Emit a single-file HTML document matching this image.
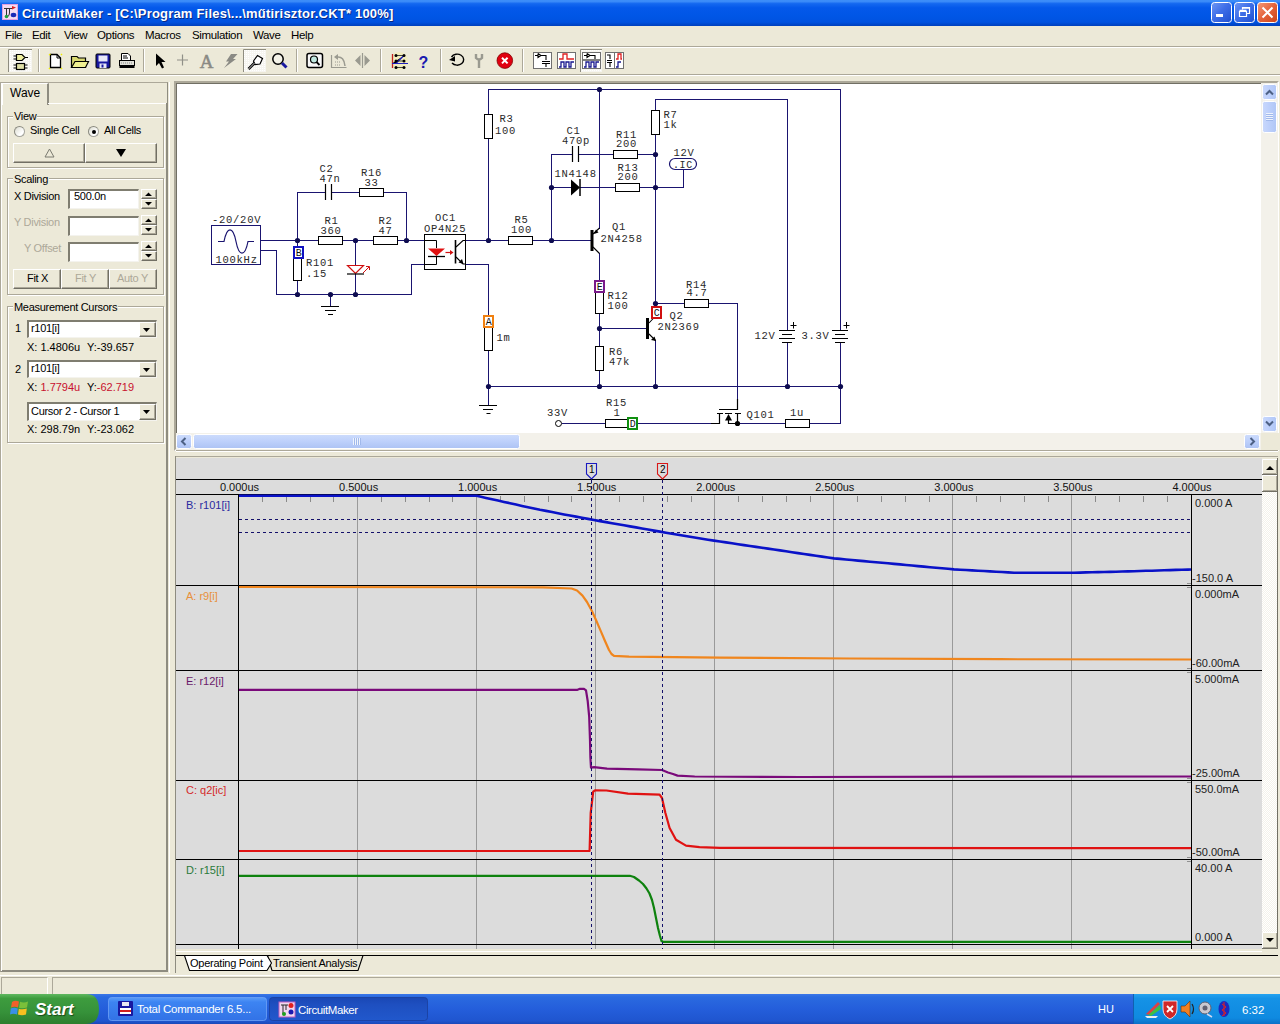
<!DOCTYPE html>
<html><head><meta charset="utf-8">
<style>
*{margin:0;padding:0;box-sizing:border-box}
html,body{width:1280px;height:1024px;overflow:hidden;background:#ece9d8;font-family:"Liberation Sans",sans-serif;font-size:11px;color:#000}
.a{position:absolute}
#title{left:0;top:0;width:1280px;height:26px;background:linear-gradient(#3d8ef8 0%,#3a8af8 6%,#1468f0 14%,#0458ea 30%,#0056e6 60%,#0052e0 85%,#0040bc 100%)}
#title .t{left:22px;top:5px;color:#fff;font-weight:bold;font-size:13px;letter-spacing:0.1px;text-shadow:1px 1px #0a1e6e}
.wb{top:3px;width:21px;height:21px;border:1px solid #fff;border-radius:3px;background:linear-gradient(135deg,#5a8cf5,#2058d8 60%,#1848c0)}
#menu{left:0;top:26px;width:1280px;height:20px}
#menu span{position:absolute;top:3px;font-size:11.5px;letter-spacing:-0.35px}
.sep{background:#aca899;}
.tbsep{width:1px;height:22px;top:50px;background:#aca899;border-right:1px solid #fff}
#left{left:0;top:82px;width:168px;height:890px;border:1px solid #8e8c80;border-left-color:#aca899;border-top-color:#aca899}
#sch{left:174px;top:81px;width:1105px;height:370px;background:#fff;border:2px solid;border-color:#aca899 #fff #fff #aca899;box-shadow:inset 1px 1px #716f64}
#wave{left:175px;top:458px;width:1087px;height:491px;background:#dcdcdc}
.lbl{font-family:"Liberation Mono",monospace;font-size:11px;position:absolute;white-space:pre}
#status{left:0;top:977px;width:1280px;height:17px;border-top:1px solid #fff}
#task{left:0;top:994px;width:1280px;height:30px;background:linear-gradient(#3168d5 0%,#4993e6 6%,#2157d7 14%,#245edb 50%,#2257d5 90%,#1941a5 100%)}

.tx{font-size:11px;letter-spacing:-0.3px;white-space:nowrap;line-height:13px;margin-top:-1px}
.gl{background:#ece9d8;padding:0 1px}
.dis{color:#aca899}
.grp{border:1px solid #aca899;box-shadow:inset 1px 1px #fff,1px 1px #fff}
.radio{width:11px;height:11px;border-radius:6px;background:linear-gradient(135deg,#dcdcd0,#fff 70%);border:1px solid #a4a49c;border-top-color:#8a8a80;border-left-color:#8a8a80}
.btn{background:#ece9d8;border:1px solid;border-color:#fff #716f64 #716f64 #fff;box-shadow:inset -1px -1px #aca899}
.edit{background:#fff;border:2px solid;border-color:#7f7d70 #f4f3ee #f4f3ee #7f7d70;border-right-width:1px;border-bottom-width:1px}
.spin{width:16px;height:21px}
.combo{background:#fff;border:2px solid;border-color:#7f7d70 #f4f3ee #f4f3ee #7f7d70;border-right-width:1px;border-bottom-width:1px}
</style></head><body>
<div id="title" class="a">
<svg class="a" style="left:0;top:0" width="1280" height="26" viewBox="0 0 1280 26">
 <defs>
  <linearGradient id="mbg" x1="0" y1="0" x2="1" y2="1"><stop offset="0" stop-color="#6f97f4"/><stop offset="0.45" stop-color="#3f6fe8"/><stop offset="1" stop-color="#1f4fd0"/></linearGradient>
  <linearGradient id="cbg" x1="0" y1="0" x2="1" y2="1"><stop offset="0" stop-color="#f39a78"/><stop offset="0.5" stop-color="#e4623a"/><stop offset="1" stop-color="#cc4418"/></linearGradient>
 </defs>
 <rect x="2.5" y="4.5" width="15" height="15" fill="#f4dcf2" stroke="#e0a0e0" stroke-width="1"/>
 <path d="M4 8.5 H12 M6.5 8.5 V16 M9.5 8.5 V13 Q9.5 16 7 17" fill="none" stroke="#333" stroke-width="1"/>
 <path d="M12 6 L16 7.5 L12 9.5 Z" fill="#e02020"/><ellipse cx="13.5" cy="15" rx="2.8" ry="2.2" fill="#1a2ab8"/><circle cx="6.5" cy="16.5" r="1.8" fill="#20a040"/>
 <text x="22" y="18" font-family="Liberation Sans" font-weight="bold" font-size="13" letter-spacing="0.2" fill="#0a1e6e" opacity="0.8" transform="translate(1 1)">CircuitMaker - [C:\Program Files\...\műtirisztor.CKT* 100%]</text>
 <text x="22" y="18" font-family="Liberation Sans" font-weight="bold" font-size="13" letter-spacing="0.2" fill="#fff">CircuitMaker - [C:\Program Files\...\műtirisztor.CKT* 100%]</text>
 <rect x="1211.5" y="2.5" width="20" height="20" rx="3" fill="url(#mbg)" stroke="#fff" stroke-width="1"/>
 <rect x="1216" y="14" width="7" height="3" fill="#fff"/>
 <rect x="1234.5" y="2.5" width="20" height="20" rx="3" fill="url(#mbg)" stroke="#fff" stroke-width="1"/>
 <path d="M1239.5 11.5 H1246.5 V16.5 H1239.5 Z M1242.5 9.5 V7.5 H1249.5 V13.5 H1247" fill="none" stroke="#fff" stroke-width="1.2"/>
 <path d="M1239.5 10.5 H1246.5 M1242.5 8 H1249.5" stroke="#fff" stroke-width="1.6"/>
 <rect x="1257.5" y="2.5" width="20" height="20" rx="3" fill="url(#cbg)" stroke="#fff" stroke-width="1"/>
 <path d="M1262.5 7.5 L1272.5 17.5 M1272.5 7.5 L1262.5 17.5" stroke="#fff" stroke-width="2"/>
</svg>
</div>
<div id="menu" class="a">
  <span style="left:5px">File</span><span style="left:32px">Edit</span><span style="left:64px">View</span><span style="left:97px">Options</span><span style="left:145px">Macros</span><span style="left:192px">Simulation</span><span style="left:253px">Wave</span><span style="left:291px">Help</span>
</div>
<div class="a" style="left:0;top:46px;width:1280px;height:1px;background:#aca899"></div>
<div class="a" style="left:0;top:47px;width:1280px;height:1px;background:#fff"></div>
<div class="a" style="left:0;top:74px;width:1280px;height:1px;background:#aca899"></div>
<div class="a" style="left:0;top:75px;width:1280px;height:1px;background:#fff"></div>



<svg class="a" style="left:0;top:46px" width="640" height="30" viewBox="0 46 640 30">
 <defs><pattern id="dots" width="2" height="2" patternUnits="userSpaceOnUse"><rect width="2" height="2" fill="#f6f5f0"/><rect width="1" height="1" fill="#fff"/></pattern></defs>
 <!-- pressed btn 1 -->
 <rect x="8" y="49" width="24" height="23" fill="url(#dots)"/>
 <path d="M8.5 72 V49.5 H32" fill="none" stroke="#8e8c80"/>
 <path d="M16.5 54.5 H22 L25 57.5 L22 60.5 H16.5 Z" fill="#f0f0a0" stroke="#000" stroke-width="1.2"/>
 <path d="M25 57.5 H28 M13.5 56 H16.5 M13.5 59 H16.5" stroke="#000" stroke-width="1.1"/>
 <rect x="16.5" y="63.5" width="8" height="6" fill="#e0e0a8" stroke="#000" stroke-width="1.2"/>
 <path d="M13.5 65 H16.5 M13.5 68 H16.5 M24.5 65 H27.5 M24.5 68 H27.5" stroke="#000" stroke-width="1.1"/>
 <line x1="38.5" y1="49" x2="38.5" y2="72" stroke="#aca899"/><line x1="39.5" y1="49" x2="39.5" y2="72" stroke="#fff"/>
 <!-- new -->
 <path d="M50.5 54.5 H57 L60.5 58 V67.5 H50.5 Z" fill="#fff" stroke="#000" stroke-width="1.3"/>
 <path d="M57 54.5 V58 H60.5" fill="none" stroke="#000"/>
 <path d="M49 55 l1.5 -1 M61 54 l1 1 M49 68 l1 1 M61 68 l1 1" stroke="#f0f000" stroke-width="1.5"/>
 <!-- open -->
 <path d="M71.5 56.5 H77 L78.5 58 H85.5 V67.5 H71.5 Z" fill="#d8d870" stroke="#000" stroke-width="1.2"/>
 <path d="M71.5 67.5 L75 61.5 H88.5 L85.5 67.5 Z" fill="#f0f090" stroke="#000" stroke-width="1.2"/>
 <!-- save -->
 <rect x="96" y="54" width="14" height="14" rx="1" fill="#1818a0" stroke="#000" stroke-width="1"/>
 <rect x="98.5" y="55.5" width="9" height="6" fill="#e8e8f8"/>
 <rect x="99.5" y="63.5" width="7" height="4.5" fill="#e8e8f8"/><rect x="101.5" y="64.5" width="2" height="3" fill="#1818a0"/>
 <!-- print -->
 <path d="M121.5 53.5 H128 L130.5 56 V60.5 H121.5 Z" fill="#fff" stroke="#000" stroke-width="1"/>
 <path d="M123 56 H127 M123 58 H128" stroke="#000"/>
 <rect x="119.5" y="60.5" width="15" height="5" fill="#e0e0d8" stroke="#000" stroke-width="1"/>
 <path d="M121 63 H133" stroke="#888" stroke-dasharray="1 1"/>
 <rect x="119.5" y="65.5" width="15" height="2.5" fill="#000"/>
 <line x1="143.5" y1="49" x2="143.5" y2="72" stroke="#aca899"/><line x1="144.5" y1="49" x2="144.5" y2="72" stroke="#fff"/>
 <!-- arrow -->
 <path d="M156 53.5 L156 66 L159 63 L162 68.5 L164 67.5 L161.5 62 L165.5 62 Z" fill="#000"/>
 <!-- plus -->
 <path d="M182.5 54.5 V65.5 M177 60 H188" stroke="#909088" stroke-width="1.2"/>
 <!-- A -->
 <text x="206.5" y="68" font-family="Liberation Serif" font-size="19" fill="#8a8a84" text-anchor="middle" stroke="#8a8a84" stroke-width="0.5">A</text>
 <!-- lightning -->
 <path d="M231 54 H237.5 L233 59 H236 L224 68 L229 61.5 H226 Z" fill="#8a8a84"/>
 <!-- pressed probe btn -->
 <rect x="243" y="49" width="23" height="23" fill="url(#dots)"/>
 <path d="M243.5 72 V49.5 H266" fill="none" stroke="#8e8c80"/>
 <path d="M253.5 61 L257.5 55.5 L262.5 58.5 L260 64 L255 64.5 Z" fill="#fff" stroke="#000" stroke-width="1.2"/>
 <path d="M254.5 63 L248.5 69" stroke="#000" stroke-width="2.6"/><path d="M254.5 63 L248.5 69" stroke="#fff" stroke-width="0.8"/>
 <!-- magnifier -->
 <circle cx="278" cy="59" r="5.2" fill="#fff" fill-opacity="0.4" stroke="#000" stroke-width="1.5"/>
 <path d="M282 63 L286.5 67.5" stroke="#1a1aa0" stroke-width="3"/>
 <line x1="296.5" y1="49" x2="296.5" y2="72" stroke="#aca899"/><line x1="297.5" y1="49" x2="297.5" y2="72" stroke="#fff"/>
 <!-- zoom rect -->
 <rect x="307" y="53.5" width="15.5" height="14" rx="2" fill="#f8f8f8" stroke="#000" stroke-width="1.5"/>
 <circle cx="314" cy="59.5" r="3.5" fill="#c0e8e0" stroke="#000" stroke-width="1.2"/>
 <path d="M316.5 62 L319.5 65" stroke="#000" stroke-width="1.8"/>
 <!-- rotate gray -->
 <path d="M331.5 55 V67.5 H346.5" fill="none" stroke="#9a9a90" stroke-width="1.2"/>
 <path d="M337 57 Q344 56 345 66" fill="none" stroke="#9a9a90" stroke-width="1.5"/>
 <path d="M334 57 L338 54 L338 60 Z" fill="#9a9a90"/>
 <path d="M335 62 H341 M335 65 H341" stroke="#9a9a90" stroke-dasharray="1 1"/>
 <!-- flip gray -->
 <path d="M362.5 53 V68" stroke="#9a9a90" stroke-width="1.2"/>
 <path d="M360.5 55 L355 60.5 L360.5 66 Z M364.5 55 L370 60.5 L364.5 66 Z" fill="#9a9a90"/>
 <line x1="380.5" y1="49" x2="380.5" y2="72" stroke="#aca899"/><line x1="381.5" y1="49" x2="381.5" y2="72" stroke="#fff"/>
 <!-- bus icon -->
 <circle cx="399" cy="61" r="9" fill="#f8f0a0" opacity="0.45"/>
 <path d="M392.5 54 V68" stroke="#c02020" stroke-width="1.3"/>
 <path d="M392 63.5 H396 L404 55.5 M396 63.5 H408" stroke="#2020c0" stroke-width="1.2"/>
 <path d="M396 55.5 H404 M396 67.5 H404 M396 61 H404" stroke="#202020" stroke-width="0.8"/>
 <circle cx="396" cy="55.5" r="1.5"/><circle cx="404" cy="55.5" r="1.5"/><circle cx="396" cy="61" r="1.5"/><circle cx="404" cy="61" r="1.5"/><circle cx="396" cy="67.5" r="1.5"/><circle cx="404" cy="67.5" r="1.5"/>
 <!-- ? -->
 <text x="423.5" y="67.5" font-family="Liberation Sans" font-weight="bold" font-size="16" fill="#1a1ab0" text-anchor="middle">?</text>
 <line x1="440.5" y1="49" x2="440.5" y2="72" stroke="#aca899"/><line x1="441.5" y1="49" x2="441.5" y2="72" stroke="#fff"/>
 <!-- undo -->
 <path d="M451.5 57 A6.5 5.5 0 1 1 452 63" fill="none" stroke="#000" stroke-width="1.4"/>
 <path d="M449 60 L455 56 L455 61.5 Z" fill="#000"/>
 <!-- wrench gray -->
 <path d="M476 54 V58 Q479 61 482 58 V54 M479 59 V68" fill="none" stroke="#9a9a90" stroke-width="2.4"/>
 <!-- stop -->
 <circle cx="504.8" cy="60.6" r="7.8" fill="#e00010" stroke="#800000" stroke-width="0.8"/>
 <path d="M502 57.8 L507.6 63.4 M507.6 57.8 L502 63.4" stroke="#fff" stroke-width="2"/>
 <line x1="522.5" y1="49" x2="522.5" y2="72" stroke="#aca899"/><line x1="523.5" y1="49" x2="523.5" y2="72" stroke="#fff"/>
 <!-- icon1 -->
 <rect x="533.5" y="52.5" width="18" height="16" fill="#fff" stroke="#707070"/>
 <path d="M535 55.5 H538 M538 53.5 V57.5 L541 55.5 L538 53.5 M541 55.5 H546 V60 M542 61.5 H550 M542 63.5 H550 M546 63.5 V67" fill="none" stroke="#000" stroke-width="1.1"/>
 <!-- icon2 -->
 <rect x="557.5" y="52.5" width="18" height="16" fill="#fff" stroke="#707070"/>
 <path d="M559 59 H563 V54 H567 V59 H574" fill="none" stroke="#e02020" stroke-width="1.3"/>
 <path d="M559 67 H561 V62 H564 V67 H566 V62 H569 V67 H571 V62 H574" fill="none" stroke="#1a1a90" stroke-width="1.3"/>
 <!-- pressed icon3 -->
 <rect x="580" y="49" width="22" height="23" fill="url(#dots)"/>
 <path d="M580.5 72 V49.5 H602" fill="none" stroke="#8e8c80"/>
 <rect x="582.5" y="52.5" width="18" height="16" fill="#fff" stroke="#707070"/>
 <path d="M584 55.5 H587 M587 53.5 V57.5 L590 55.5 L587 53.5 M590 55.5 H595 V59 M583 60 H600" fill="none" stroke="#000" stroke-width="1.1"/>
 <path d="M584 67 H586 V62 H589 V67 H591 V62 H594 V67 H596 V62 H599" fill="none" stroke="#1a1a90" stroke-width="1.3"/>
 <!-- icon4 -->
 <rect x="605.5" y="52.5" width="18" height="16" fill="#fff" stroke="#707070"/>
 <path d="M607 55 H610 V59 M607 60.5 H612 M607 62.5 H612 M610 62.5 V67" fill="none" stroke="#000" stroke-width="1.1"/>
 <path d="M614.5 53 V68" stroke="#707070"/>
 <path d="M616 59 H618 V54 H621 V59 H622" fill="none" stroke="#e02020" stroke-width="1.3"/>
 <path d="M616 67 H618 V62 H621" fill="none" stroke="#1a1a90" stroke-width="1.3"/>
</svg>

<div id="left" class="a">
  <!-- tab -->
  <div class="a" style="left:1px;top:0px;width:47px;height:22px;border-left:1px solid #fff;border-top:1px solid #fff;border-right:2px solid #8e8c80;background:#ece9d8"></div>
  <div class="a tx" style="left:9px;top:5px;font-size:12px;letter-spacing:0">Wave</div>
  <div class="a" style="left:47px;top:20px;width:119px;height:1px;background:#fff"></div>
  <div class="a" style="left:165px;top:20px;width:1px;height:868px;background:#8e8c80"></div>
  <div class="a" style="left:1px;top:887px;width:165px;height:1px;background:#8e8c80"></div>
  <!-- View group -->
  <div class="a grp" style="left:6px;top:33px;width:157px;height:52px"></div>
  <div class="a tx gl" style="left:12px;top:28px">View</div>
  <div class="a radio" style="left:13px;top:43px"></div>
  <div class="a tx" style="left:29px;top:42px">Single Cell</div>
  <div class="a radio" style="left:87px;top:43px"><div class="a" style="left:3px;top:3px;width:4px;height:4px;border-radius:2px;background:#000"></div></div>
  <div class="a tx" style="left:103px;top:42px">All Cells</div>
  <div class="a btn" style="left:12px;top:60px;width:72px;height:20px"></div>
  <svg class="a" style="left:43px;top:65px" width="11" height="10"><path d="M5.5 1 L10 9 L1 9 Z" fill="none" stroke="#7a7a70" stroke-width="1"/></svg>
  <div class="a btn" style="left:84px;top:60px;width:72px;height:20px"></div>
  <svg class="a" style="left:115px;top:66px" width="10" height="9"><path d="M0 0 L10 0 L5 8 Z" fill="#000"/></svg>
  <!-- Scaling group -->
  <div class="a grp" style="left:6px;top:95px;width:157px;height:117px"></div>
  <div class="a tx gl" style="left:12px;top:91px">Scaling</div>
  <div class="a tx" style="left:13px;top:108px">X Division</div>
  <div class="a edit" style="left:67px;top:106px;width:71px;height:20px"></div>
  <div class="a tx" style="left:73px;top:108px">500.0n</div>
  <div class="a spin" style="left:140px;top:106px"><div class="a btn" style="left:0;top:0;width:16px;height:10px"></div><div class="a btn" style="left:0;top:10px;width:16px;height:10px"></div><svg class="a" style="left:4px;top:3px" width="8" height="14"><path d="M0 4 L7 4 L3.5 0.5 Z M0 10 L7 10 L3.5 13.5 Z" fill="#000"/></svg></div>
  <div class="a tx dis" style="left:13px;top:134px">Y Division</div>
  <div class="a edit" style="left:67px;top:133px;width:71px;height:20px"></div>
  <div class="a spin" style="left:140px;top:132px"><div class="a btn" style="left:0;top:0;width:16px;height:10px"></div><div class="a btn" style="left:0;top:10px;width:16px;height:10px"></div><svg class="a" style="left:4px;top:3px" width="8" height="14"><path d="M0 4 L7 4 L3.5 0.5 Z M0 10 L7 10 L3.5 13.5 Z" fill="#000"/></svg></div>
  <div class="a tx dis" style="left:23px;top:160px">Y Offset</div>
  <div class="a edit" style="left:67px;top:159px;width:71px;height:20px"></div>
  <div class="a spin" style="left:140px;top:158px"><div class="a btn" style="left:0;top:0;width:16px;height:10px"></div><div class="a btn" style="left:0;top:10px;width:16px;height:10px"></div><svg class="a" style="left:4px;top:3px" width="8" height="14"><path d="M0 4 L7 4 L3.5 0.5 Z M0 10 L7 10 L3.5 13.5 Z" fill="#000"/></svg></div>
  <div class="a btn" style="left:12px;top:186px;width:48px;height:20px"></div>
  <div class="a tx" style="left:26px;top:190px">Fit X</div>
  <div class="a btn" style="left:60px;top:186px;width:48px;height:20px"></div>
  <div class="a tx dis" style="left:74px;top:190px">Fit Y</div>
  <div class="a btn" style="left:108px;top:186px;width:48px;height:20px"></div>
  <div class="a tx dis" style="left:116px;top:190px">Auto Y</div>
  <!-- Measurement group -->
  <div class="a grp" style="left:6px;top:223px;width:157px;height:137px"></div>
  <div class="a tx gl" style="left:12px;top:219px">Measurement Cursors</div>
  <div class="a tx" style="left:14px;top:240px">1</div>
  <div class="a combo" style="left:26px;top:237px;width:130px;height:18px"><div class="a btn" style="right:0;top:0;width:17px;height:100%"></div><svg class="a" style="right:5px;top:6px" width="8" height="5"><path d="M0 0 L7 0 L3.5 4 Z" fill="#000"/></svg></div>
  <div class="a tx" style="left:30px;top:240px">r101[i]</div>
  <div class="a tx" style="left:26px;top:259px;letter-spacing:0">X: 1.4806u</div><div class="a tx" style="left:86px;top:259px;letter-spacing:0">Y:-39.657</div>
  <div class="a tx" style="left:14px;top:281px">2</div>
  <div class="a combo" style="left:26px;top:277px;width:130px;height:18px"><div class="a btn" style="right:0;top:0;width:17px;height:100%"></div><svg class="a" style="right:5px;top:6px" width="8" height="5"><path d="M0 0 L7 0 L3.5 4 Z" fill="#000"/></svg></div>
  <div class="a tx" style="left:30px;top:280px">r101[i]</div>
  <div class="a tx" style="left:26px;top:299px;letter-spacing:0">X: <span style="color:#c8102e">1.7794u</span></div><div class="a tx" style="left:86px;top:299px;letter-spacing:0">Y:<span style="color:#c8102e">-62.719</span></div>
  <div class="a combo" style="left:26px;top:319px;width:130px;height:19px"><div class="a btn" style="right:0;top:0;width:17px;height:100%"></div><svg class="a" style="right:5px;top:6px" width="8" height="5"><path d="M0 0 L7 0 L3.5 4 Z" fill="#000"/></svg></div>
  <div class="a tx" style="left:30px;top:323px">Cursor 2 - Cursor 1</div>
  <div class="a tx" style="left:26px;top:341px;letter-spacing:0">X: 298.79n</div><div class="a tx" style="left:86px;top:341px;letter-spacing:0">Y:-23.062</div>
</div>

<div id="sch" class="a"></div>
<!--SCH--><svg class="a" style="left:176px;top:83px" width="1085" height="350" viewBox="176 83 1085 350" shape-rendering="auto"><g font-family="Liberation Mono" fill="none"><path d="M261 240.5H298" stroke="#1a1470"/>
<path d="M261 250.5H277" stroke="#1a1470"/>
<path d="M276.5 250V295" stroke="#1a1470"/>
<path d="M276 294.5H412" stroke="#1a1470"/>
<path d="M297.5 192V241" stroke="#1a1470"/>
<path d="M297.5 240V247" stroke="#1a1470"/>
<path d="M297.5 280V295" stroke="#1a1470"/>
<path d="M297 192.5H326" stroke="#1a1470"/>
<path d="M331 192.5H360" stroke="#1a1470"/>
<path d="M383 192.5H407" stroke="#1a1470"/>
<path d="M406.5 192V241" stroke="#1a1470"/>
<path d="M297 240.5H319" stroke="#1a1470"/>
<path d="M342 240.5H374" stroke="#1a1470"/>
<path d="M397 240.5H425" stroke="#1a1470"/>
<path d="M355.5 240V266" stroke="#1a1470"/>
<path d="M355.5 274V295" stroke="#1a1470"/>
<path d="M330.5 294V307" stroke="#1a1470"/>
<path d="M411.5 264V295" stroke="#1a1470"/>
<path d="M411 264.5H425" stroke="#1a1470"/>
<path d="M465 240.5H509" stroke="#1a1470"/>
<path d="M532 240.5H592" stroke="#1a1470"/>
<path d="M465 264.5H489" stroke="#1a1470"/>
<path d="M488.5 264V316" stroke="#1a1470"/>
<path d="M488.5 89V115" stroke="#1a1470"/>
<path d="M488.5 138V241" stroke="#1a1470"/>
<path d="M488.5 350V387" stroke="#1a1470"/>
<path d="M488.5 386V406" stroke="#1a1470"/>
<path d="M488 89.5H841" stroke="#1a1470"/>
<path d="M551.5 154V241" stroke="#1a1470"/>
<path d="M551 154.5H573" stroke="#1a1470"/>
<path d="M579 154.5H614" stroke="#1a1470"/>
<path d="M637 154.5H656" stroke="#1a1470"/>
<path d="M551 187.5H572" stroke="#1a1470"/>
<path d="M580 187.5H616" stroke="#1a1470"/>
<path d="M639 187.5H684" stroke="#1a1470"/>
<path d="M683.5 169V188" stroke="#1a1470"/>
<path d="M599.5 89V229" stroke="#1a1470"/>
<path d="M599.5 253V281" stroke="#1a1470"/>
<path d="M599.5 313V347" stroke="#1a1470"/>
<path d="M599.5 370V387" stroke="#1a1470"/>
<path d="M599 328.5H648" stroke="#1a1470"/>
<path d="M655 99.5H788" stroke="#1a1470"/>
<path d="M655.5 99V111" stroke="#1a1470"/>
<path d="M655.5 134V304" stroke="#1a1470"/>
<path d="M655 303.5H685" stroke="#1a1470"/>
<path d="M708 303.5H738" stroke="#1a1470"/>
<path d="M737.5 303V410" stroke="#1a1470"/>
<path d="M655.5 340V387" stroke="#1a1470"/>
<path d="M488 386.5H841" stroke="#1a1470"/>
<path d="M787.5 99V331" stroke="#1a1470"/>
<path d="M787.5 342V387" stroke="#1a1470"/>
<path d="M840.5 89V331" stroke="#1a1470"/>
<path d="M840.5 342V424" stroke="#1a1470"/>
<path d="M562 423.5H606" stroke="#1a1470"/>
<path d="M637 423.5H712" stroke="#1a1470"/>
<path d="M737 423.5H786" stroke="#1a1470"/>
<path d="M809 423.5H841" stroke="#1a1470"/>
<circle cx="297.5" cy="240.5" r="2.6" fill="#0e0c50"/>
<circle cx="297.5" cy="294.5" r="2.6" fill="#0e0c50"/>
<circle cx="330.5" cy="294.5" r="2.6" fill="#0e0c50"/>
<circle cx="355.5" cy="240.5" r="2.6" fill="#0e0c50"/>
<circle cx="355.5" cy="294.5" r="2.6" fill="#0e0c50"/>
<circle cx="406.5" cy="240.5" r="2.6" fill="#0e0c50"/>
<circle cx="488.5" cy="240.5" r="2.6" fill="#0e0c50"/>
<circle cx="551.5" cy="240.5" r="2.6" fill="#0e0c50"/>
<circle cx="551.5" cy="187.5" r="2.6" fill="#0e0c50"/>
<circle cx="599.5" cy="89.5" r="2.6" fill="#0e0c50"/>
<circle cx="655.5" cy="154.5" r="2.6" fill="#0e0c50"/>
<circle cx="655.5" cy="187.5" r="2.6" fill="#0e0c50"/>
<circle cx="655.5" cy="303.5" r="2.6" fill="#0e0c50"/>
<circle cx="599.5" cy="328.5" r="2.6" fill="#0e0c50"/>
<circle cx="488.5" cy="386.5" r="2.6" fill="#0e0c50"/>
<circle cx="599.5" cy="386.5" r="2.6" fill="#0e0c50"/>
<circle cx="655.5" cy="386.5" r="2.6" fill="#0e0c50"/>
<circle cx="787.5" cy="386.5" r="2.6" fill="#0e0c50"/>
<circle cx="840.5" cy="386.5" r="2.6" fill="#0e0c50"/>
<rect x="211.5" y="225.5" width="49" height="39" fill="#fff" stroke="#1a1470" stroke-width="1"/>
<path d="M218 241.5 H224 C227 226 233 226 236 241.5 C239 257 245 257 248 241.5 H254" fill="none" stroke="#1a1470" stroke-width="1.2"/>
<text x="212" y="222.5" font-size="10.5" letter-spacing="0.73" fill="#2a2a2a">-20/20V</text>
<text x="215.5" y="262.5" font-size="10.5" letter-spacing="0.73" fill="#2a2a2a">100kHz</text>
<path d="M325.5 184 V200 M331.5 184 V200" stroke="#000" stroke-width="1.2"/>
<text x="319.5" y="171.5" font-size="10.5" letter-spacing="0.73" fill="#2a2a2a">C2</text>
<text x="319.5" y="182" font-size="10.5" letter-spacing="0.73" fill="#2a2a2a">47n</text>
<rect x="359.5" y="188.5" width="24" height="8" fill="#fff" stroke="#000" stroke-width="1"/>
<text x="361" y="175.5" font-size="10.5" letter-spacing="0.73" fill="#2a2a2a">R16</text>
<text x="364.5" y="185.5" font-size="10.5" letter-spacing="0.73" fill="#2a2a2a">33</text>
<rect x="318.5" y="236.5" width="24" height="8" fill="#fff" stroke="#000" stroke-width="1"/>
<text x="324.5" y="223.5" font-size="10.5" letter-spacing="0.73" fill="#2a2a2a">R1</text>
<text x="320.5" y="233.5" font-size="10.5" letter-spacing="0.73" fill="#2a2a2a">360</text>
<rect x="373.5" y="236.5" width="24" height="8" fill="#fff" stroke="#000" stroke-width="1"/>
<text x="378.5" y="223.5" font-size="10.5" letter-spacing="0.73" fill="#2a2a2a">R2</text>
<text x="378.5" y="233.5" font-size="10.5" letter-spacing="0.73" fill="#2a2a2a">47</text>
<rect x="293.5" y="258.5" width="8" height="22" fill="#fff" stroke="#000" stroke-width="1"/>
<rect x="294" y="247" width="9" height="11" fill="#fff" stroke="#1010c0" stroke-width="2"/>
<text x="298.8" y="255.5" font-size="10" text-anchor="middle" fill="#111">B</text>
<text x="306" y="265.5" font-size="10.5" letter-spacing="0.73" fill="#2a2a2a">R101</text>
<text x="306" y="276.5" font-size="10.5" letter-spacing="0.73" fill="#2a2a2a">.15</text>
<path d="M321 306.5 H339 M325 310.5 H336 M328 314.5 H333" stroke="#000" stroke-width="1"/>
<path d="M347.5 265.5 H363.5 L355.5 273.5 Z" fill="#fff" stroke="#d01010" stroke-width="1.2"/>
<path d="M347 274 H364" stroke="#000" stroke-width="1.2"/>
<path d="M363 273 L369 267 M366 266.5 H369.5 V270" fill="none" stroke="#d01010" stroke-width="1"/>
<rect x="424.5" y="234.5" width="41" height="35" fill="#fff" stroke="#000" stroke-width="1"/>
<text x="435" y="221" font-size="10.5" letter-spacing="0.73" fill="#2a2a2a">OC1</text>
<text x="424" y="231.5" font-size="10.5" letter-spacing="0.73" fill="#2a2a2a">OP4N25</text>
<path d="M424 240.5 H436.5 V248 M436.5 256 V264.5 H424" fill="none" stroke="#000" stroke-width="1"/>
<path d="M428 248.5 H445 L436.5 256 Z" fill="#e01010"/>
<path d="M428 256.5 H445" stroke="#000" stroke-width="1.3"/>
<path d="M445.5 252.5 H452" stroke="#d01010" stroke-width="1.2"/><path d="M450 250 L453.5 252.5 L450 255 Z" fill="#d01010"/>
<path d="M455.5 240 V263.5" stroke="#000" stroke-width="1.6"/>
<path d="M456 247 L463 240.5 H466 M456 257 L463 264 H466" fill="none" stroke="#000" stroke-width="1.1"/>
<path d="M463.5 264 L458.5 262.5 L462 259 Z" fill="#000"/>
<rect x="484.5" y="114.5" width="8" height="24" fill="#fff" stroke="#000" stroke-width="1"/>
<text x="499.5" y="121.5" font-size="10.5" letter-spacing="0.73" fill="#2a2a2a">R3</text>
<text x="495" y="133.5" font-size="10.5" letter-spacing="0.73" fill="#2a2a2a">100</text>
<rect x="508.5" y="236.5" width="24" height="8" fill="#fff" stroke="#000" stroke-width="1"/>
<text x="514.5" y="223" font-size="10.5" letter-spacing="0.73" fill="#2a2a2a">R5</text>
<text x="511" y="233" font-size="10.5" letter-spacing="0.73" fill="#2a2a2a">100</text>
<path d="M572.5 146 V162 M578.5 146 V162" stroke="#000" stroke-width="1.2"/>
<text x="566.5" y="133.5" font-size="10.5" letter-spacing="0.73" fill="#2a2a2a">C1</text>
<text x="562" y="144" font-size="10.5" letter-spacing="0.73" fill="#2a2a2a">470p</text>
<rect x="613.5" y="150.5" width="24" height="8" fill="#fff" stroke="#000" stroke-width="1"/>
<text x="616" y="138" font-size="10.5" letter-spacing="0.73" fill="#2a2a2a">R11</text>
<text x="616" y="147" font-size="10.5" letter-spacing="0.73" fill="#2a2a2a">200</text>
<path d="M571 179.5 V195.5 L580 187.5 Z" fill="#000"/><path d="M580 179 V196" stroke="#000" stroke-width="1.5"/>
<text x="554.5" y="176.5" font-size="10.5" letter-spacing="0.73" fill="#2a2a2a">1N4148</text>
<rect x="615.5" y="183.5" width="24" height="8" fill="#fff" stroke="#000" stroke-width="1"/>
<text x="617.5" y="170.5" font-size="10.5" letter-spacing="0.73" fill="#2a2a2a">R13</text>
<text x="617.5" y="180" font-size="10.5" letter-spacing="0.73" fill="#2a2a2a">200</text>
<rect x="651.5" y="110.5" width="8" height="24" fill="#fff" stroke="#000" stroke-width="1"/>
<text x="663.5" y="118" font-size="10.5" letter-spacing="0.73" fill="#2a2a2a">R7</text>
<text x="663.5" y="128" font-size="10.5" letter-spacing="0.73" fill="#2a2a2a">1k</text>
<rect x="669.5" y="158.5" width="27" height="11" rx="5.5" fill="#fff" stroke="#1a1470" stroke-width="1.2"/>
<text x="673.5" y="155.5" font-size="10.5" letter-spacing="0.73" fill="#2a2a2a">12V</text>
<text x="673" y="167.5" font-size="10" letter-spacing="0.6" fill="#2a2a2a">.IC</text>
<path d="M592 230 V251" stroke="#000" stroke-width="3"/>
<path d="M593 234 L599.5 228 M593 247 L599.5 253.5" fill="none" stroke="#000" stroke-width="1.1"/>
<path d="M594 234 L596 229.5 L598.5 232.5 Z" fill="#000"/>
<text x="612" y="229.5" font-size="10.5" letter-spacing="0.73" fill="#2a2a2a">Q1</text>
<text x="600.5" y="242" font-size="10.5" letter-spacing="0.73" fill="#2a2a2a">2N4258</text>
<rect x="595.5" y="291.5" width="8" height="22" fill="#fff" stroke="#000" stroke-width="1"/>
<rect x="595" y="281" width="9" height="11" fill="#fff" stroke="#7a1a8a" stroke-width="2"/>
<text x="599.8" y="289.5" font-size="10" text-anchor="middle" fill="#111">E</text>
<text x="607.5" y="298.5" font-size="10.5" letter-spacing="0.73" fill="#2a2a2a">R12</text>
<text x="607.5" y="309" font-size="10.5" letter-spacing="0.73" fill="#2a2a2a">100</text>
<rect x="595.5" y="346.5" width="8" height="24" fill="#fff" stroke="#000" stroke-width="1"/>
<text x="609" y="354.5" font-size="10.5" letter-spacing="0.73" fill="#2a2a2a">R6</text>
<text x="609" y="365" font-size="10.5" letter-spacing="0.73" fill="#2a2a2a">47k</text>
<path d="M647.5 318 V339" stroke="#000" stroke-width="3"/>
<path d="M649 323 L655.5 316 M649 334 L655.5 340.5" fill="none" stroke="#000" stroke-width="1.1"/>
<path d="M656 341 L651 340 L654.5 336.5 Z" fill="#000"/>
<rect x="652" y="307" width="9" height="11" fill="#fff" stroke="#d01010" stroke-width="2"/>
<text x="656.8" y="315.5" font-size="10" text-anchor="middle" fill="#111">C</text>
<text x="669.5" y="318.5" font-size="10.5" letter-spacing="0.73" fill="#2a2a2a">Q2</text>
<text x="657.5" y="330" font-size="10.5" letter-spacing="0.73" fill="#2a2a2a">2N2369</text>
<rect x="684.5" y="299.5" width="24" height="8" fill="#fff" stroke="#000" stroke-width="1"/>
<text x="686" y="287.5" font-size="10.5" letter-spacing="0.73" fill="#2a2a2a">R14</text>
<text x="686.5" y="296" font-size="10.5" letter-spacing="0.73" fill="#2a2a2a">4.7</text>
<rect x="484.5" y="327.5" width="8" height="23" fill="#fff" stroke="#000" stroke-width="1"/>
<rect x="484" y="316" width="9" height="11" fill="#fff" stroke="#f08010" stroke-width="2"/>
<text x="488.8" y="324.5" font-size="10" text-anchor="middle" fill="#111">A</text>
<text x="496.5" y="340.5" font-size="10.5" letter-spacing="0.73" fill="#2a2a2a">1m</text>
<path d="M479 405.5 H497 M483 409.5 H493 M486.5 413.5 H490.5" stroke="#000" stroke-width="1"/>
<path d="M779 330.5 H795 M782 334.5 H792 M779 338.5 H795 M782 342.5 H792" stroke="#000" stroke-width="1.2"/>
<path d="M793.5 322 V328.5 M790.5 325.5 H796.5" stroke="#000" stroke-width="1"/>
<text x="754.5" y="339" font-size="10.5" letter-spacing="0.73" fill="#2a2a2a">12V</text>
<path d="M832 330.5 H848 M835 334.5 H845 M832 338.5 H848 M835 342.5 H845" stroke="#000" stroke-width="1.2"/>
<path d="M846.5 322 V328.5 M843.5 325.5 H849.5" stroke="#000" stroke-width="1"/>
<text x="801.5" y="339" font-size="10.5" letter-spacing="0.73" fill="#2a2a2a">3.3V</text>
<rect x="605.5" y="419.5" width="24" height="8" fill="#fff" stroke="#000" stroke-width="1"/>
<rect x="628" y="418" width="9" height="11" fill="#fff" stroke="#109010" stroke-width="2"/>
<text x="632.8" y="426.5" font-size="10" text-anchor="middle" fill="#111">D</text>
<text x="606" y="405.5" font-size="10.5" letter-spacing="0.73" fill="#2a2a2a">R15</text>
<text x="613.5" y="416" font-size="10.5" letter-spacing="0.73" fill="#2a2a2a">1</text>
<circle cx="558.5" cy="423.5" r="3" fill="#fff" stroke="#000" stroke-width="1"/>
<text x="547" y="415.5" font-size="10.5" letter-spacing="0.73" fill="#2a2a2a">33V</text>
<path d="M737.5 399 V409.5 H719" fill="none" stroke="#000" stroke-width="1.2"/>
<path d="M717 413.5 H723 M725 413.5 H732 M735 413.5 H741" stroke="#000" stroke-width="1.2"/>
<path d="M719.5 413.5 V423.5 H711 M737.5 413.5 V423 M728.5 420 V423.5 H737" fill="none" stroke="#000" stroke-width="1.2"/>
<path d="M725 420.5 H732 L728.5 414 Z" fill="#000"/>
<circle cx="737.5" cy="423.5" r="2.6" fill="#000"/>
<text x="746.5" y="418" font-size="10.5" letter-spacing="0.73" fill="#2a2a2a">Q101</text>
<rect x="785.5" y="419.5" width="24" height="8" fill="#fff" stroke="#000" stroke-width="1"/>
<text x="790" y="416" font-size="10.5" letter-spacing="0.73" fill="#2a2a2a">1u</text></g></svg><!--/SCH-->
<div id="wave" class="a"></div>
<!--WAVE--><svg class="a" style="left:176px;top:456px" width="1104" height="500" viewBox="176 456 1104 500"><g font-family="Liberation Sans"><rect x="176" y="458" width="1086" height="491" fill="#dcdcdc"/>
<path d="M357.5 494V949" stroke="#9a9a9a"/>
<path d="M476.5 494V949" stroke="#9a9a9a"/>
<path d="M595.5 494V949" stroke="#9a9a9a"/>
<path d="M714.5 494V949" stroke="#9a9a9a"/>
<path d="M833.5 494V949" stroke="#9a9a9a"/>
<path d="M952.5 494V949" stroke="#9a9a9a"/>
<path d="M1071.5 494V949" stroke="#9a9a9a"/>
<path d="M262.5 496V502" stroke="#8a8a8a"/>
<path d="M286.5 496V502" stroke="#8a8a8a"/>
<path d="M310.5 496V502" stroke="#8a8a8a"/>
<path d="M333.5 496V502" stroke="#8a8a8a"/>
<path d="M381.5 496V502" stroke="#8a8a8a"/>
<path d="M405.5 496V502" stroke="#8a8a8a"/>
<path d="M429.5 496V502" stroke="#8a8a8a"/>
<path d="M452.5 496V502" stroke="#8a8a8a"/>
<path d="M500.5 496V502" stroke="#8a8a8a"/>
<path d="M524.5 496V502" stroke="#8a8a8a"/>
<path d="M548.5 496V502" stroke="#8a8a8a"/>
<path d="M571.5 496V502" stroke="#8a8a8a"/>
<path d="M619.5 496V502" stroke="#8a8a8a"/>
<path d="M643.5 496V502" stroke="#8a8a8a"/>
<path d="M667.5 496V502" stroke="#8a8a8a"/>
<path d="M691.5 496V502" stroke="#8a8a8a"/>
<path d="M738.5 496V502" stroke="#8a8a8a"/>
<path d="M762.5 496V502" stroke="#8a8a8a"/>
<path d="M786.5 496V502" stroke="#8a8a8a"/>
<path d="M810.5 496V502" stroke="#8a8a8a"/>
<path d="M857.5 496V502" stroke="#8a8a8a"/>
<path d="M881.5 496V502" stroke="#8a8a8a"/>
<path d="M905.5 496V502" stroke="#8a8a8a"/>
<path d="M929.5 496V502" stroke="#8a8a8a"/>
<path d="M976.5 496V502" stroke="#8a8a8a"/>
<path d="M1000.5 496V502" stroke="#8a8a8a"/>
<path d="M1024.5 496V502" stroke="#8a8a8a"/>
<path d="M1048.5 496V502" stroke="#8a8a8a"/>
<path d="M1095.5 496V502" stroke="#8a8a8a"/>
<path d="M1119.5 496V502" stroke="#8a8a8a"/>
<path d="M1143.5 496V502" stroke="#8a8a8a"/>
<path d="M1167.5 496V502" stroke="#8a8a8a"/>
<path d="M176 479.5H1262" stroke="#000"/>
<path d="M176 494.5H1262" stroke="#000"/>
<path d="M176 585.5H1262" stroke="#000"/>
<path d="M176 670.5H1262" stroke="#000"/>
<path d="M176 780.5H1262" stroke="#000"/>
<path d="M176 859.5H1262" stroke="#000"/>
<path d="M176 944.5H1262" stroke="#000"/>
<path d="M238.5 494V949 M1191.5 494V949" stroke="#000"/>
<text x="239.5" y="491" text-anchor="middle" font-size="11" fill="#111">0.000us</text>
<text x="358.6" y="491" text-anchor="middle" font-size="11" fill="#111">0.500us</text>
<text x="477.6" y="491" text-anchor="middle" font-size="11" fill="#111">1.000us</text>
<text x="596.7" y="491" text-anchor="middle" font-size="11" fill="#111">1.500us</text>
<text x="715.8" y="491" text-anchor="middle" font-size="11" fill="#111">2.000us</text>
<text x="834.8" y="491" text-anchor="middle" font-size="11" fill="#111">2.500us</text>
<text x="953.9" y="491" text-anchor="middle" font-size="11" fill="#111">3.000us</text>
<text x="1072.9" y="491" text-anchor="middle" font-size="11" fill="#111">3.500us</text>
<text x="1192.0" y="491" text-anchor="middle" font-size="11" fill="#111">4.000us</text>
<text x="1195" y="507" font-size="11" fill="#222">0.000 A</text>
<text x="1192" y="582" font-size="11" fill="#222">-150.0 A</text>
<text x="1195" y="598" font-size="11" fill="#222">0.000mA</text>
<text x="1192" y="667" font-size="11" fill="#222">-60.00mA</text>
<text x="1195" y="683" font-size="11" fill="#222">5.000mA</text>
<text x="1192" y="777" font-size="11" fill="#222">-25.00mA</text>
<text x="1195" y="793" font-size="11" fill="#222">550.0mA</text>
<text x="1192" y="856" font-size="11" fill="#222">-50.00mA</text>
<text x="1195" y="872" font-size="11" fill="#222">40.00 A</text>
<text x="1195" y="941" font-size="11" fill="#222">0.000 A</text>
<path d="M1187 583.5H1191 M1187 587.5H1191" stroke="#909090"/>
<path d="M1187 668.5H1191 M1187 672.5H1191" stroke="#909090"/>
<path d="M1187 778.5H1191 M1187 782.5H1191" stroke="#909090"/>
<path d="M1187 857.5H1191 M1187 861.5H1191" stroke="#909090"/>
<text x="186" y="509" font-size="11" fill="#2a2aa0">B: r101[i]</text>
<text x="186" y="600" font-size="11" fill="#e8903a">A: r9[i]</text>
<text x="186" y="685" font-size="11" fill="#6a1a6a">E: r12[i]</text>
<text x="186" y="794" font-size="11" fill="#d42a2a">C: q2[ic]</text>
<text x="186" y="874" font-size="11" fill="#2a7a3a">D: r15[i]</text>
<path d="M239 519.5H1191 M239 532.5H1191" stroke="#14106a" stroke-dasharray="3 3"/>
<path d="M239.0 495.8 L476.5 495.8 L480.0 496.6 L486.0 497.9 L492.0 499.2 L498.0 500.6 L504.0 501.9 L510.0 503.2 L516.0 504.5 L522.0 505.9 L528.0 507.2 L534.0 508.5 L540.0 509.8 L546.0 510.9 L552.0 512.1 L558.0 513.2 L564.0 514.4 L570.0 515.5 L576.0 516.6 L582.0 517.8 L588.0 518.9 L594.0 520.0 L600.0 521.1 L606.0 522.1 L612.0 523.2 L618.0 524.3 L624.0 525.3 L630.0 526.4 L636.0 527.4 L642.0 528.5 L648.0 529.5 L654.0 530.6 L660.0 531.6 L666.0 532.7 L672.0 533.7 L678.0 534.7 L684.0 535.7 L690.0 536.7 L696.0 537.7 L702.0 538.7 L708.0 539.7 L714.0 540.6 L720.0 541.5 L726.0 542.4 L732.0 543.3 L738.0 544.2 L744.0 545.1 L750.0 546.0 L756.0 546.9 L762.0 547.8 L768.0 548.6 L774.0 549.5 L780.0 550.4 L786.0 551.3 L792.0 552.2 L798.0 553.1 L804.0 554.0 L810.0 554.9 L816.0 555.7 L822.0 556.6 L828.0 557.5 L834.0 558.4 L840.0 558.9 L846.0 559.5 L852.0 560.0 L858.0 560.6 L864.0 561.1 L870.0 561.7 L876.0 562.2 L882.0 562.8 L888.0 563.3 L894.0 563.9 L900.0 564.4 L906.0 565.0 L912.0 565.5 L918.0 566.1 L924.0 566.6 L930.0 567.2 L936.0 567.7 L942.0 568.3 L948.0 568.8 L954.0 569.4 L960.0 569.7 L966.0 570.0 L972.0 570.4 L978.0 570.7 L984.0 571.0 L990.0 571.4 L996.0 571.7 L1002.0 572.0 L1008.0 572.4 L1014.0 572.7 L1020.0 572.8 L1026.0 572.8 L1032.0 572.8 L1038.0 572.8 L1044.0 572.8 L1050.0 572.8 L1056.0 572.8 L1062.0 572.8 L1068.0 572.8 L1074.0 572.8 L1080.0 572.6 L1086.0 572.4 L1092.0 572.3 L1098.0 572.1 L1104.0 572.0 L1110.0 571.9 L1116.0 571.7 L1122.0 571.5 L1128.0 571.4 L1134.0 571.2 L1140.0 571.0 L1146.0 570.8 L1152.0 570.7 L1158.0 570.5 L1164.0 570.3 L1170.0 570.1 L1176.0 569.9 L1182.0 569.8 L1188.0 569.6 L1191.0 569.5" fill="none" stroke="#0a12c8" stroke-width="2.6" stroke-linejoin="round"/>
<path d="M239.0 587.0 L543.0 587.3 L571.6 588.5 L577.0 590.5 L582.5 595.6 L587.0 602.0 L591.9 611.0 L596.0 620.0 L601.0 631.6 L605.0 641.0 L609.0 650.0 L611.5 654.0 L614.0 655.8 L629.0 656.6 L720.0 657.7 L850.0 658.5 L1000.0 659.2 L1191.0 659.5" fill="none" stroke="#f0861e" stroke-width="2.2" stroke-linejoin="round"/>
<path d="M239.0 689.8 L577.5 689.8 L580.0 688.8 L584.0 688.8 L586.0 690.3 L587.7 701.0 L589.2 717.0 L590.0 740.0 L590.4 757.5 L591.0 767.6 L594.0 767.2 L607.0 768.6 L638.0 769.4 L662.0 770.0 L668.0 772.5 L673.0 774.0 L677.5 775.6 L694.7 776.5 L800.0 777.0 L1191.0 776.5" fill="none" stroke="#7a0a7a" stroke-width="2.2" stroke-linejoin="round"/>
<path d="M239.0 851.0 L589.6 851.0 L590.7 813.0 L593.2 791.6 L595.0 790.3 L606.5 790.5 L628.0 793.6 L659.6 794.6 L662.0 798.0 L665.4 813.0 L669.6 828.0 L676.0 839.8 L686.0 845.6 L699.5 847.2 L720.0 847.8 L1191.0 848.2" fill="none" stroke="#e01212" stroke-width="2.2" stroke-linejoin="round"/>
<path d="M239.0 875.8 L629.8 875.8 L634.0 877.0 L639.0 880.5 L643.0 884.0 L646.5 888.5 L649.5 893.5 L652.0 900.0 L654.0 908.0 L656.0 918.0 L658.0 928.0 L660.0 936.0 L661.5 941.0 L663.0 941.8 L1191.0 941.8" fill="none" stroke="#0e820e" stroke-width="2.2" stroke-linejoin="round"/>
<path d="M591.5 480V949 M662.5 480V949" stroke="#14106a" stroke-dasharray="3 3"/>
<path d="M586.5 463.5 H596.5 V474 L591.5 479 L586.5 474 Z" fill="#dcdcdc" stroke="#1a1ac0" stroke-width="1.1"/>
<text x="591.7" y="473" text-anchor="middle" font-size="10" fill="#000">1</text>
<path d="M657.5 463.5 H667.5 V474 L662.5 479 L657.5 474 Z" fill="#dcdcdc" stroke="#d81818" stroke-width="1.1"/>
<text x="662.7" y="473" text-anchor="middle" font-size="10" fill="#000">2</text>
<defs><pattern id="chk" width="2" height="2" patternUnits="userSpaceOnUse"><rect width="2" height="2" fill="#f4f2ea"/><rect width="1" height="1" fill="#fff"/><rect x="1" y="1" width="1" height="1" fill="#fff"/></pattern></defs>
<rect x="1262" y="459" width="16" height="490" fill="url(#chk)"/>
<rect x="1262" y="459" width="16" height="16" fill="#ece9d8"/>
<path d="M1262.5 475 V459.5 H1278" fill="none" stroke="#fff"/>
<path d="M1262 474.5 H1277.5 V459" fill="none" stroke="#716f64"/>
<path d="M1263 473.5 H1276.5 V460" fill="none" stroke="#aca899"/>
<path d="M1266 470 H1274 L1270 466 Z" fill="#000"/>
<rect x="1262" y="475" width="16" height="17" fill="#ece9d8"/>
<path d="M1262.5 492 V475.5 H1278" fill="none" stroke="#fff"/>
<path d="M1262 491.5 H1277.5 V475" fill="none" stroke="#716f64"/>
<path d="M1263 490.5 H1276.5 V476" fill="none" stroke="#aca899"/>
<rect x="1262" y="932" width="16" height="17" fill="#ece9d8"/>
<path d="M1262.5 949 V932.5 H1278" fill="none" stroke="#fff"/>
<path d="M1262 948.5 H1277.5 V932" fill="none" stroke="#716f64"/>
<path d="M1263 947.5 H1276.5 V933" fill="none" stroke="#aca899"/>
<path d="M1266 938 H1274 L1270 942 Z" fill="#000"/></g></svg><!--/WAVE-->
<!--MISC-->
<svg class="a" style="left:176px;top:83px" width="1104" height="374" viewBox="176 83 1104 374">
 <defs>
  <linearGradient id="xpth" x1="0" y1="0" x2="1" y2="0"><stop offset="0" stop-color="#c9d8fc"/><stop offset="0.5" stop-color="#bccffb"/><stop offset="1" stop-color="#b0c6f6"/></linearGradient>
  <linearGradient id="xptv" x1="0" y1="0" x2="0" y2="1"><stop offset="0" stop-color="#cddcfc"/><stop offset="0.5" stop-color="#bdd0fb"/><stop offset="1" stop-color="#adc3f4"/></linearGradient>
 </defs>
 <!-- vertical track -->
 <rect x="1261" y="83" width="17" height="350" fill="#f3f1ea"/>
 <rect x="1262.5" y="84.5" width="14" height="15" rx="2" fill="url(#xpth)" stroke="#fff"/>
 <path d="M1266 94.5 L1269.5 91 L1273 94.5" fill="none" stroke="#4d6185" stroke-width="2"/>
 <rect x="1262.5" y="101.5" width="14" height="31" rx="2" fill="url(#xpth)" stroke="#fff"/>
 <path d="M1266 113.5H1273 M1266 115.5H1273 M1266 117.5H1273 M1266 119.5H1273" stroke="#eef3fd"/>
 <path d="M1266 114.5H1273 M1266 116.5H1273 M1266 118.5H1273 M1266 120.5H1273" stroke="#8faae0" stroke-width="0.6"/>
 <rect x="1262.5" y="416.5" width="14" height="15" rx="2" fill="url(#xpth)" stroke="#fff"/>
 <path d="M1266 421.5 L1269.5 425 L1273 421.5" fill="none" stroke="#4d6185" stroke-width="2"/>
 <!-- horizontal track -->
 <rect x="176" y="433" width="1085" height="17" fill="#f3f1ea"/>
 <rect x="176.5" y="434.5" width="15" height="14" rx="2" fill="url(#xptv)" stroke="#fff"/>
 <path d="M185.5 438 L182 441.5 L185.5 445" fill="none" stroke="#4d6185" stroke-width="2"/>
 <rect x="193.5" y="434.5" width="326" height="14" rx="2" fill="url(#xptv)" stroke="#fff"/>
 <path d="M353.5 438V445 M355.5 438V445 M357.5 438V445 M359.5 438V445" stroke="#eef3fd"/>
 <path d="M354.5 438V445 M356.5 438V445 M358.5 438V445 M360.5 438V445" stroke="#8faae0" stroke-width="0.6"/>
 <rect x="1244.5" y="434.5" width="15" height="14" rx="2" fill="url(#xptv)" stroke="#fff"/>
 <path d="M1250.5 438 L1254 441.5 L1250.5 445" fill="none" stroke="#4d6185" stroke-width="2"/>
 <rect x="1261" y="433" width="19" height="17" fill="#ece9d8"/>
 <!-- splitter -->
 <path d="M176 450.5H1278" stroke="#aca899"/>
 <path d="M176 451.5H1278" stroke="#fff"/>
 <path d="M176 456.5H1278" stroke="#aca899"/>
 <path d="M176 457.5H1278" stroke="#f8f8f4"/>
</svg>
<!-- waveform frame left/right -->
<div class="a" style="left:175px;top:456px;width:1px;height:517px;background:#8e8c80"></div>
<div class="a" style="left:1277px;top:458px;width:1px;height:492px;background:#716f64"></div>
<!-- bottom tabs -->
<svg class="a" style="left:176px;top:949px" width="1104" height="30" viewBox="176 949 1104 30">
 <rect x="176" y="949" width="1104" height="26" fill="#ece9d8"/><path d="M176 951.5H1262" stroke="#fff"/>
 <path d="M176 955.5H185 M363 955.5H1278" stroke="#000"/>
 <path d="M267.5 955.5 L272 970.5 H358 L363 955.5 Z" fill="#ece9d8" stroke="#000" stroke-width="1.1"/>
 <path d="M184.5 955.5 L189.5 970.5 H267 L271.5 963 L267 955.5 Z" fill="#fff" stroke="#000" stroke-width="1.1"/>
 <text x="190" y="967" font-family="Liberation Sans" font-size="11" letter-spacing="-0.25" fill="#000">Operating Point</text>
 <text x="273" y="967" font-family="Liberation Sans" font-size="11" letter-spacing="-0.25" fill="#000">Transient Analysis</text>
</svg>
<!-- status bar -->
<div class="a" style="left:0;top:975px;width:1280px;height:1px;background:#fff"></div>
<div class="a" style="left:1px;top:977px;width:47px;height:17px;border-top:1px solid #aca899;border-left:1px solid #aca899;border-right:1px solid #fff"></div>
<div class="a" style="left:52px;top:977px;width:1228px;height:17px;border-top:1px solid #aca899;border-left:1px solid #aca899"></div>
<div class="a" style="left:169px;top:82px;width:1px;height:891px;background:#fff"></div>
<div class="a" style="left:1px;top:83px;width:1px;height:888px;background:#fff"></div>
<!-- taskbar -->
<svg class="a" style="left:0;top:994px" width="1280" height="30" viewBox="0 994 1280 30">
 <defs>
  <linearGradient id="tbg" x1="0" y1="0" x2="0" y2="1"><stop offset="0" stop-color="#3b77e8"/><stop offset="0.1" stop-color="#2a6ae0"/><stop offset="0.5" stop-color="#245edb"/><stop offset="0.9" stop-color="#1f55cf"/><stop offset="1" stop-color="#1a48b8"/></linearGradient>
  <linearGradient id="stg" x1="0" y1="0" x2="0" y2="1"><stop offset="0" stop-color="#5fb85f"/><stop offset="0.15" stop-color="#3e9c3e"/><stop offset="0.6" stop-color="#36923a"/><stop offset="1" stop-color="#2c7e2e"/></linearGradient>
  <linearGradient id="trg" x1="0" y1="0" x2="0" y2="1"><stop offset="0" stop-color="#24a3f0"/><stop offset="0.15" stop-color="#1592e6"/><stop offset="0.8" stop-color="#0f8ae0"/><stop offset="1" stop-color="#0b70c8"/></linearGradient>
  <linearGradient id="tkg" x1="0" y1="0" x2="0" y2="1"><stop offset="0" stop-color="#5a9cf8"/><stop offset="0.2" stop-color="#3d84f2"/><stop offset="1" stop-color="#3272e6"/></linearGradient>
  <linearGradient id="tkp" x1="0" y1="0" x2="0" y2="1"><stop offset="0" stop-color="#1a47b4"/><stop offset="0.3" stop-color="#1e4fc0"/><stop offset="1" stop-color="#2158cc"/></linearGradient>
 </defs>
 <rect x="0" y="994" width="1280" height="30" fill="url(#tbg)"/>
 <path d="M0 994 H86 Q99 994 99 1009 Q99 1024 86 1024 H0 Z" fill="url(#stg)"/>
 <g transform="translate(11 1000)">
  <path d="M1 2 Q4 0 8 1.5 L7 7.5 Q3.5 6 0 7.5 Z" fill="#f0602a"/>
  <path d="M9 1.8 Q13 3.5 17 1.5 L16 7.5 Q12 9 8 7.7 Z" fill="#7ac03a"/>
  <path d="M-0.2 8.5 Q3 7 6.8 8.5 L6 14.5 Q2.5 13 -1 14.5 Z" fill="#3a90e8"/>
  <path d="M7.8 8.7 Q11.5 10 15.8 8.5 L15 14.5 Q11 16 7 14.5 Z" fill="#f8c020"/>
 </g>
 <text x="35" y="1014.5" font-family="Liberation Sans" font-style="italic" font-weight="bold" font-size="17" fill="#fff" style="text-shadow:1px 1px 1px #1a4a1a">Start</text>
 <rect x="108.5" y="997.5" width="158" height="23" rx="3" fill="url(#tkg)" stroke="#6ea2f6" stroke-width="0.8"/>
 <rect x="118" y="1001" width="15" height="15" rx="1" fill="#1818a0"/>
 <rect x="122" y="1002" width="7" height="4" fill="#e8e8f0"/><rect x="120" y="1008" width="11" height="2" fill="#fff"/><rect x="120" y="1010" width="11" height="2" fill="#d02020"/><rect x="120" y="1012" width="11" height="2" fill="#fff"/>
 <text x="137" y="1013" font-family="Liberation Sans" font-size="11.5" letter-spacing="-0.25" fill="#fff">Total Commander 6.5...</text>
 <rect x="269.5" y="997.5" width="158" height="23" rx="3" fill="url(#tkp)" stroke="#1a3e9a" stroke-width="0.8"/>
 <rect x="279" y="1002" width="16" height="15" fill="#f2d8f0" stroke="#c05ec0"/>
 <path d="M281 1005 H288 M283 1005 V1014 M286 1005 V1010" stroke="#2a2a2a" stroke-width="1"/>
 <circle cx="291" cy="1005.5" r="2.5" fill="#e02020"/><circle cx="291" cy="1012" r="2.5" fill="#1a1ab0"/><circle cx="284" cy="1014" r="2" fill="#20a020"/>
 <text x="298" y="1013.5" font-family="Liberation Sans" font-size="11.5" letter-spacing="-0.4" fill="#fff">CircuitMaker</text>
 <text x="1098" y="1013" font-family="Liberation Sans" font-size="11" fill="#fff">HU</text>
 <rect x="1133" y="994" width="147" height="30" fill="url(#trg)"/>
 <path d="M1133.5 994 V1024" stroke="#1060b0" stroke-width="1"/>
 <!-- tray icons -->
 <path d="M1146 1014 L1158 1002 L1160 1004 L1149 1015 Z" fill="#e04040"/><path d="M1148 1015 L1160 1005 L1161 1009 L1151 1016 Z" fill="#40c040"/><path d="M1145 1016 H1158 L1156 1018 H1147 Z" fill="#eee"/>
 <path d="M1163 1001 H1177 V1009 Q1177 1016 1170 1019 Q1163 1016 1163 1009 Z" fill="#d02828" stroke="#fff" stroke-width="0.8"/>
 <path d="M1167 1006 L1173 1012 M1173 1006 L1167 1012" stroke="#fff" stroke-width="1.8"/>
 <path d="M1181 1006 H1185 L1190 1001 V1017 L1185 1012 H1181 Z" fill="#f08020" stroke="#603010" stroke-width="0.6"/><path d="M1192 1004 Q1195 1009 1192 1014" fill="none" stroke="#222" stroke-width="1.2"/>
 <circle cx="1205" cy="1008" r="6" fill="#c8c8d0" stroke="#606070"/><circle cx="1205" cy="1008" r="2.5" fill="#606070"/><path d="M1207 1014 L1212 1017" stroke="#d0d8f0" stroke-width="1.5"/>
 <ellipse cx="1224" cy="1009" rx="5.5" ry="8" fill="#1a2ac0"/><path d="M1222 1004 L1226 1007 L1222 1010 L1226 1013 L1222 1016 M1224 1002 V1016" fill="none" stroke="#e02020" stroke-width="1"/>
 <text x="1242" y="1013.5" font-family="Liberation Sans" font-size="11.5" fill="#fff">6:32</text>
</svg>
<!--/MISC-->
</body></html>
